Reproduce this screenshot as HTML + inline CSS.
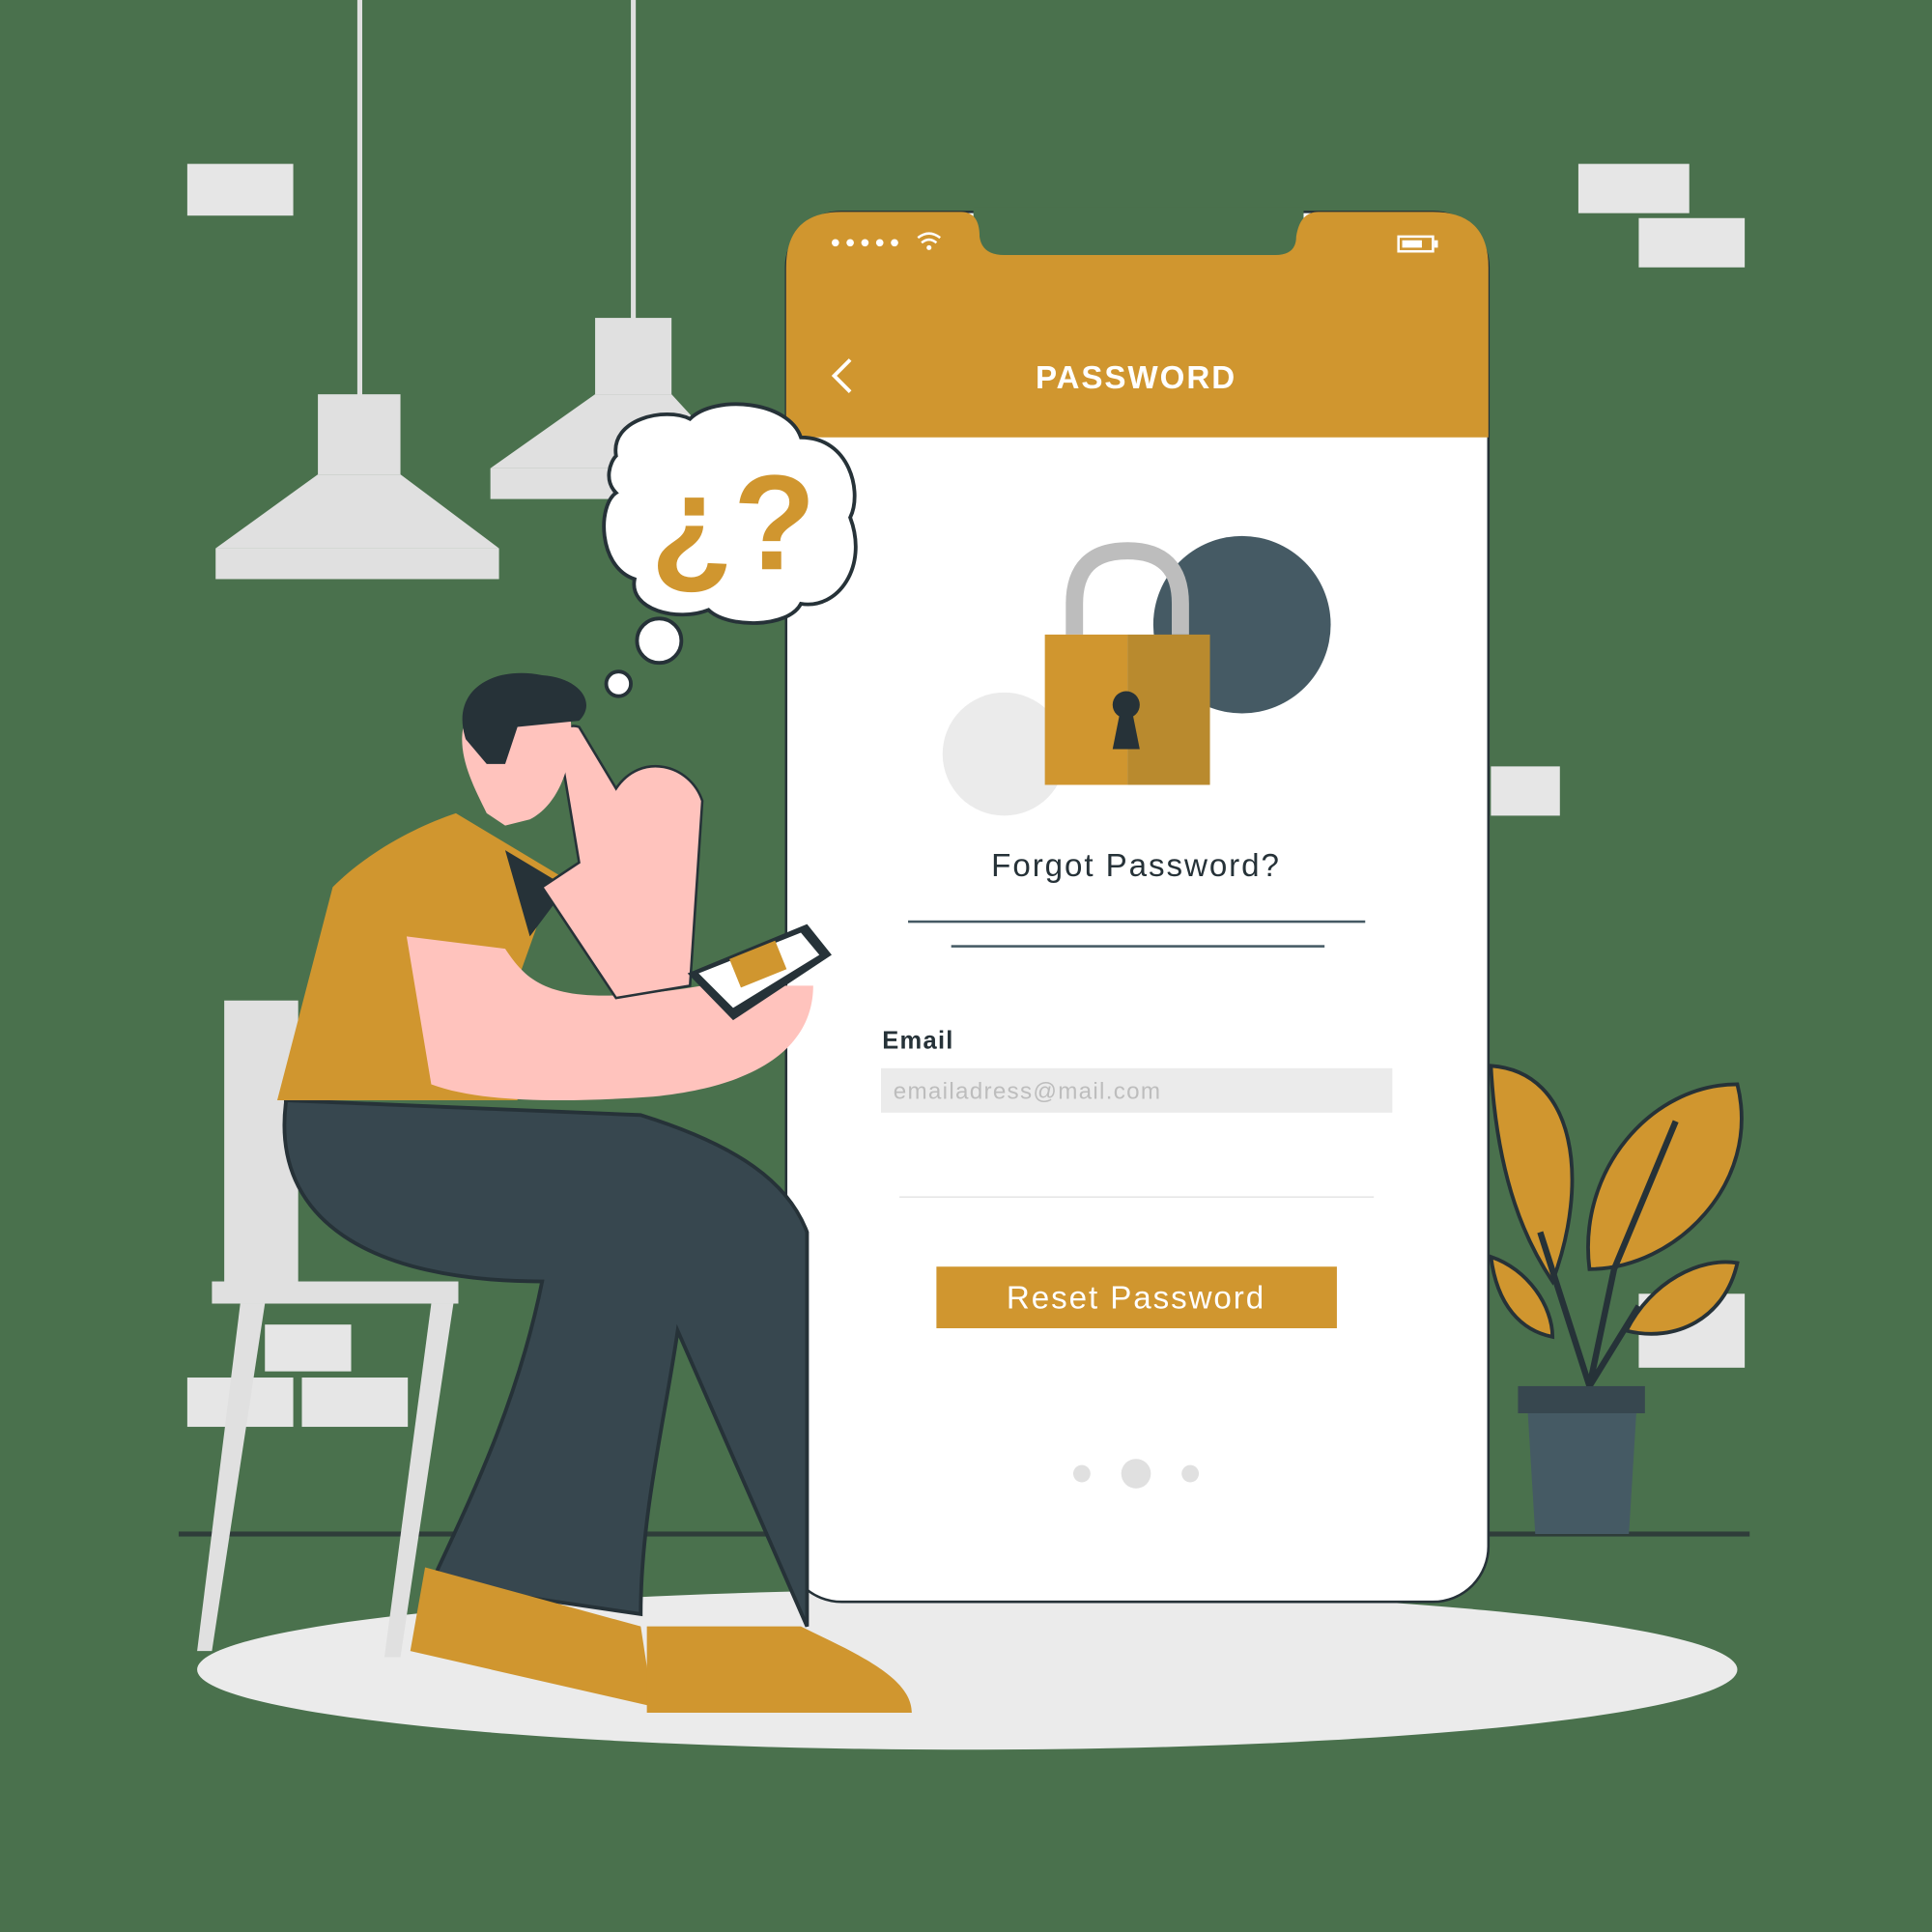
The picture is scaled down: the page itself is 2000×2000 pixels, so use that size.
<!DOCTYPE html>
<html><head><meta charset="utf-8"><style>
html,body{margin:0;padding:0;background:#4a714d;width:2000px;height:2000px;overflow:hidden}
svg{display:block}
text{font-family:"Liberation Sans",sans-serif}
</style></head><body>
<svg width="2000" height="2000" viewBox="0 0 1568 1568" xmlns="http://www.w3.org/2000/svg">
<rect width="1568" height="1568" fill="#4a714d"/>
<g fill="#e6e6e6">
<rect x="152" y="133" width="86" height="42"/>
<rect x="1281" y="133" width="90" height="40"/>
<rect x="1330" y="177" width="86" height="40"/>
<rect x="1210" y="622" width="56" height="40"/>
<rect x="152" y="1118" width="86" height="40"/>
<rect x="245" y="1118" width="86" height="40"/>
<rect x="215" y="1075" width="70" height="38"/>
<rect x="1330" y="1050" width="86" height="60"/>
</g>
<g fill="#e0e0e0">
<rect x="290" y="0" width="4" height="322"/>
<rect x="512" y="0" width="4" height="260"/>
<rect x="258" y="320" width="67" height="65"/>
<polygon points="258,385 325,385 405,445 175,445"/>
<rect x="175" y="445" width="230" height="25"/>
<rect x="483" y="258" width="62" height="62"/>
<polygon points="483,320 545,320 600,380 398,380"/>
<rect x="398" y="380" width="200" height="25"/>
</g>
<ellipse cx="785" cy="1355" rx="625" ry="65" fill="#ebebeb"/>
<rect x="145" y="1243" width="1275" height="4" fill="#2f3d3a"/>
<g fill="#d0962f" stroke="#263238" stroke-width="3">
<path d="M1210,865 C1280,870 1290,960 1260,1040 C1240,1010 1215,960 1210,865Z"/>
<path d="M1410,880 C1430,960 1360,1030 1290,1030 C1280,950 1340,880 1410,880Z"/>
<path d="M1410,1025 C1400,1070 1360,1090 1320,1080 C1340,1040 1380,1020 1410,1025Z"/>
<path d="M1210,1020 C1240,1030 1260,1060 1260,1085 C1235,1080 1215,1060 1210,1020Z"/>
</g>
<path d="M1290,1125 L1310,1030 M1290,1125 L1330,1060 M1290,1125 L1250,1000 M1310,1030 L1360,910" stroke="#263238" stroke-width="5" fill="none"/>
<rect x="1232" y="1125" width="103" height="22" fill="#37474f"/>
<polygon points="1240,1147 1328,1147 1322,1245 1246,1245" fill="#455a64"/>
<!-- phone -->
<rect x="638" y="172" width="570" height="1128" rx="45" fill="#fff" stroke="#263238" stroke-width="2"/>
<rect x="790" y="168" width="268" height="39" fill="#4a714d"/>
<path d="M638,355 L638,217 Q638,172 683,172 L780,172 Q795,172 795,192 Q797,207 815,207 L1035,207 Q1052,207 1052,192 Q1055,172 1070,172 L1163,172 Q1208,172 1208,217 L1208,355Z" fill="#d0962f"/>
<g fill="#fff"><circle cx="678" cy="197" r="3"/><circle cx="690" cy="197" r="3"/><circle cx="702" cy="197" r="3"/><circle cx="714" cy="197" r="3"/><circle cx="726" cy="197" r="3"/></g>
<path d="M745,193 Q754,186 763,193 M748,197 Q754,192 760,197" stroke="#fff" stroke-width="2" fill="none"/><circle cx="754" cy="201" r="2" fill="#fff"/>
<rect x="1135" y="192" width="28" height="12" fill="none" stroke="#fff" stroke-width="2"/><rect x="1138" y="195" width="16" height="6" fill="#fff"/><rect x="1164" y="195" width="3" height="6" fill="#fff"/>
<path d="M690,292 L677,305 L690,318" stroke="#fff" stroke-width="3" fill="none"/>
<text x="922" y="315" text-anchor="middle" fill="#fff" font-size="26" font-weight="bold" letter-spacing="1.5">PASSWORD</text>
<circle cx="1008" cy="507" r="72" fill="#455a64"/>
<circle cx="815" cy="612" r="50" fill="#ebebeb"/>
<path d="M872,515 L872,490 Q872,447 915,447 Q958,447 958,490 L958,515" stroke="#bdbdbd" stroke-width="14" fill="none"/>
<rect x="848" y="515" width="67" height="122" fill="#d0962f"/>
<rect x="915" y="515" width="67" height="122" fill="#b98a2e"/>
<circle cx="914" cy="572" r="11" fill="#263238"/><polygon points="909,578 919,578 925,608 903,608" fill="#263238"/>
<text x="922" y="711" text-anchor="middle" fill="#263238" font-size="26" letter-spacing="1.5">Forgot Password?</text>
<rect x="737" y="747" width="371" height="2" fill="#455a64"/>
<rect x="772" y="767" width="303" height="2" fill="#455a64"/>
<text x="716" y="851" fill="#263238" font-size="20" font-weight="bold" letter-spacing="1">Email</text>
<rect x="715" y="867" width="415" height="36" fill="#ebebeb"/>
<text x="725" y="892" fill="#bdbdbd" font-size="19" letter-spacing="1">emailadress@mail.com</text>
<rect x="730" y="971" width="385" height="1" fill="#e0e0e0"/>
<rect x="760" y="1028" width="325" height="50" fill="#d0962f"/>
<text x="922" y="1062" text-anchor="middle" fill="#fff" font-size="26" letter-spacing="1.5">Reset Password</text>
<circle cx="878" cy="1196" r="7" fill="#e0e0e0"/><circle cx="922" cy="1196" r="12" fill="#e0e0e0"/><circle cx="966" cy="1196" r="7" fill="#e0e0e0"/>
<!-- chair -->
<rect x="182" y="812" width="60" height="245" fill="#e0e0e0"/>
<rect x="172" y="1040" width="200" height="18" fill="#e0e0e0"/>
<polygon points="195,1058 215,1058 172,1340 160,1340" fill="#e0e0e0"/>
<polygon points="350,1058 368,1058 325,1345 312,1345" fill="#e0e0e0"/>
<!-- person -->
<path d="M232,895 C220,990 300,1040 440,1040 C420,1140 380,1220 350,1285 L520,1310 C520,1230 540,1150 550,1080 L655,1320 L655,1000 C640,960 600,930 520,905 L232,893Z" fill="#37474f" stroke="#263238" stroke-width="3"/>
<path d="M345,1272 L520,1320 L530,1385 L333,1340Z" fill="#d0962f"/>
<path d="M525,1320 L650,1320 C690,1340 740,1360 740,1390 L525,1390Z" fill="#d0962f"/>
<path d="M225,893 L270,720 C300,690 340,670 370,660 L470,720 L440,740 L415,810 L420,893Z" fill="#d0962f"/>
<path d="M410,690 L460,720 L430,760Z" fill="#263238"/>
<path d="M330,760 L410,770 C430,800 450,820 570,800 L660,800 C660,840 630,880 530,890 C460,895 390,895 350,880Z" fill="#ffc3bd"/>
<path d="M440,720 L500,810 L560,800 L570,650 C560,620 520,610 500,640 L470,590 Q455,585 455,610 L470,700Z" fill="#ffc3bd" stroke="#263238" stroke-width="2"/>
<path d="M375,600 C375,560 420,555 460,570 C470,600 460,650 430,665 L410,670 L395,660 C385,640 375,620 375,600Z" fill="#ffc3bd"/>
<path d="M378,600 C365,560 400,540 440,548 C470,550 485,570 470,585 L420,590 L410,620 L395,620Z" fill="#263238"/>
<path d="M558,790 L655,750 L675,775 L595,828Z" fill="#263238"/>
<path d="M567,790 L650,757 L665,775 L595,818Z" fill="#fff"/>
<rect x="595" y="770" width="40" height="25" fill="#d0962f" transform="rotate(-22 615 782)"/>
<!-- thought bubble -->
<path d="M500,370 C495,340 540,330 560,340 C580,320 640,325 650,355 C690,355 700,400 690,420 C705,460 680,495 650,490 C640,510 590,510 575,495 C550,505 510,495 515,470 C485,460 485,410 500,400 C490,390 495,375 500,370Z" fill="#fff" stroke="#263238" stroke-width="3"/>
<circle cx="535" cy="520" r="18" fill="#fff" stroke="#263238" stroke-width="3"/>
<circle cx="502" cy="555" r="10" fill="#fff" stroke="#263238" stroke-width="3"/>
<text x="595" y="462" text-anchor="middle" fill="#d0962f" font-size="110" font-weight="bold">¿?</text>
</svg>
</body></html>
